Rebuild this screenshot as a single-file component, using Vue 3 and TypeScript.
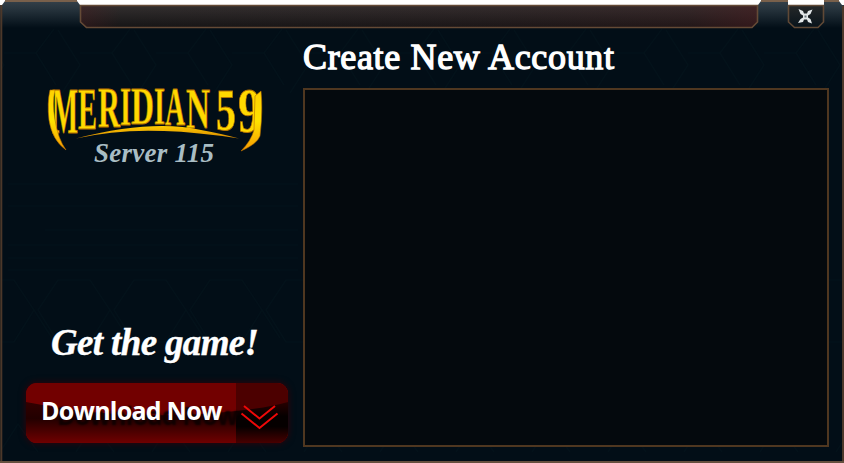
<script setup lang="ts">
interface Glyph { ch: string; x: number; y: number; w: number; size: number }
// Letters of the wordmark: left edge, baseline, width and type size
const glyphs: Glyph[] = [
  { ch: 'M', x: 6, y: 47, w: 26, size: 65 },
  { ch: 'E', x: 32, y: 43, w: 19, size: 60 },
  { ch: 'R', x: 52, y: 41, w: 22, size: 57 },
  { ch: 'I', x: 74, y: 39, w: 11, size: 54 },
  { ch: 'D', x: 85, y: 38, w: 23, size: 53 },
  { ch: 'I', x: 108, y: 38, w: 11, size: 53 },
  { ch: 'A', x: 119, y: 39, w: 20, size: 54 },
  { ch: 'N', x: 140, y: 42, w: 24, size: 58 },
  { ch: '5', x: 170, y: 44, w: 20, size: 60 },
  { ch: '9', x: 192, y: 46, w: 23, size: 63 },
]
const cells: number[] = Array.from({ length: 12 }, (_, i) => i * 76)
</script>

<template>
  <main class="window">
    <svg class="frame" width="844" height="463" viewBox="0 0 844 463" aria-hidden="true">
      <defs>
        <linearGradient id="shell" x1="0" y1="0" x2="0" y2="28" gradientUnits="userSpaceOnUse">
          <stop offset="0" stop-color="#36424b" />
          <stop offset=".35" stop-color="#25323b" />
          <stop offset="1" stop-color="#020e17" />
        </linearGradient>
        <linearGradient id="bar" x1="0" y1="0" x2="0" y2="1">
          <stop offset="0" stop-color="#332f2f" />
          <stop offset="1" stop-color="#151415" />
        </linearGradient>
        <linearGradient id="barGlow" x1="0" y1="0" x2="1" y2="0">
          <stop offset="0" stop-color="#501c20" stop-opacity=".35" />
          <stop offset=".06" stop-color="#501c20" stop-opacity="0" />
          <stop offset=".6" stop-color="#501c20" stop-opacity=".08" />
          <stop offset=".9" stop-color="#501c20" stop-opacity=".2" />
          <stop offset="1" stop-color="#501c20" stop-opacity=".5" />
        </linearGradient>
        <linearGradient id="closeBg" x1="0" y1="0" x2="0" y2="1">
          <stop offset="0" stop-color="#252829" />
          <stop offset="1" stop-color="#08131b" />
        </linearGradient>
      </defs>
      <path fill="url(#shell)" d="M2 5L5 1H77L80 5H758L761 1H788V5H824V1H839L842 5H844V463H0V5Z" />
      <g fill="none" stroke="#06171f" stroke-width="1.5" opacity=".45">
        <g v-for="x in cells" :key="x">
          <path :d="`M${x - 18} 30l22 35 -18 28M${x + 4} 53h32l18 -24M${x + 36} 53l20 32`" />
          <path :d="`M${x - 18} 280h32l20 30 -20 32h-32l-20 -32zM${x + 34} 310l18 28`" />
          <path :d="`M${x} 452l18 -28 20 28`" />
        </g>
        <path d="M8 184h290M8 206h290M45 230h253M8 245h290M8 258h290M8 270h290" />
      </g>
      <path fill="url(#bar)" d="M80 5H758V22L752 28H86L80 22Z" />
      <path fill="url(#barGlow)" d="M80 5H758V22L752 28H86L80 22Z" />
      <path fill="none" stroke="#644a36" stroke-width="1.6" d="M80.500 5.500H757.500V22L752 27.500H86.500L80.500 22Z" />
      <path fill="url(#closeBg)" stroke="#604936" stroke-width="1.6" d="M788.500 5.500H823.500V22L818 27.500H794.500L788.500 22Z" />
      <path fill="none" stroke="#79604b" stroke-width="2" d="M5 1H77M761 1H788M824 1H839" />
      <path fill="none" stroke="#4c382a" stroke-width="2" d="M1.300 5V462M843 6V462" />
      <path fill="none" stroke="#65503f" stroke-width="2" d="M0 462H844" />
    </svg>
    <button class="close" aria-label="Close">
      <svg width="17" height="17" viewBox="0 0 17 17">
        <path fill="#e2e7e9" d="M1.500 1L6 3L7 5.500H10L11 3L15.500 1.500L13.500 6L11 7.500V9.500L13.500 11L15 15.500L11 14L10 11.500H7L6 14L1 15L3.500 11L6 9.500V7.500L3.500 6Z" />
        <path fill="#6b777e" d="M7.500 7.500h2v2h-2z" />
      </svg>
    </button>
    <aside class="side">
      <svg class="logo" width="220" height="70" viewBox="0 0 220 70" role="img">
        <defs>
          <linearGradient id="gold" x1="0" y1="0" x2="0" y2="1">
            <stop offset="0" stop-color="#ffd000" />
            <stop offset=".5" stop-color="#ffe300" />
            <stop offset="1" stop-color="#f69b00" />
          </linearGradient>
          <linearGradient id="goldArc" x1="0" y1="0" x2="0" y2="1">
            <stop offset="0" stop-color="#ffcd00" />
            <stop offset="1" stop-color="#d88600" />
          </linearGradient>
        </defs>
        <text v-for="(g, i) in glyphs" :key="i" :x="g.x" :y="g.y" :font-size="g.size" :textLength="g.w" lengthAdjust="spacingAndGlyphs">{{ g.ch }}</text>
        <g fill="url(#gold)" stroke="#b56c00" stroke-width=".6">
          <path d="M4 4H9Q6 17 9 34Q12 53 20 64Q6 54 3 34Q1 17 4 4Z" />
          <path d="M209 10L215 5Q217 25 214 50Q211 58 195 65Q205 55 208 44Z" />
        </g>
        <path fill="url(#goldArc)" d="M30 52.500Q106 33 155 44Q177 48 193 52.500Q151 46 118 45Q72 43 30 52.500Z" />
      </svg>
      <p class="server">Server 115</p>
      <h2 class="get">Get the game!</h2>
      <button class="download">
        <svg class="gloss" width="262" height="60" viewBox="0 0 262 60" aria-hidden="true">
          <defs>
            <linearGradient id="low" x1="0" y1="0" x2="0" y2="1">
              <stop offset="0" stop-color="#320000" />
              <stop offset=".4" stop-color="#220000" />
              <stop offset="1" stop-color="#700000" />
            </linearGradient>
            <linearGradient id="lowRight" x1="0" y1="0" x2="0" y2="1">
              <stop offset="0" stop-color="#280000" />
              <stop offset=".35" stop-color="#050000" />
              <stop offset=".6" stop-color="#050000" />
              <stop offset="1" stop-color="#480000" />
            </linearGradient>
          </defs>
          <path fill="#720000" d="M0 0H262V60H0Z" />
          <path fill="#4c0000" d="M210 0H262V60H210Z" />
          <path fill="url(#low)" d="M0 19Q100 40 210 28V60H0Z" />
          <path fill="url(#lowRight)" d="M210 28Q240 25 262 19V60H210Z" />
          <path fill="none" stroke="#ed0808" stroke-width="2" d="M218 23l15.500 12.500 15.500 -12.500M215.500 30.500l18 14.500 18 -14.500" />
        </svg>
        <span>Download Now</span>
      </button>
    </aside>
    <section class="main">
      <h1>Create New Account</h1>
      <div class="panel"></div>
    </section>
  </main>
</template>

<style>
body { margin: 0; background: #fff; }
</style>
<style scoped>
* { box-sizing: border-box; }
.window { position: relative; width: 844px; height: 463px; display: grid; grid-template-columns: 303px 526px; overflow: hidden; }
.frame { position: absolute; inset: 0; }
.close { position: absolute; left: 797px; top: 8px; width: 17px; height: 17px; padding: 0; border: 0; background: none; }
.close svg { display: block; }
.side { position: relative; display: flex; flex-direction: column; align-items: flex-start; padding: 86px 0 0 26px; }
.logo { margin-left: 20px; overflow: visible; flex: none; }
.logo text { font-family: "Liberation Serif", serif; font-weight: 700; fill: #ffd900; stroke: #b87300; stroke-width: .8; }
.server, .get { font-family: "Liberation Serif", serif; font-style: italic; font-weight: 700; white-space: nowrap; }
.server { color: #a9bdc4; font-size: 27px; line-height: 30px; letter-spacing: .25px; margin: -18px 0 0 68px; }
.get { color: #fff; font-size: 37px; line-height: 44px; letter-spacing: -.65px; -webkit-text-stroke: .4px #fff; margin: 153px 0 0 25px; }
.download { position: relative; display: flex; align-items: center; width: 262px; height: 60px; margin-top: 18px; padding: 0 0 6px 15px; border: 0; border-radius: 11px; overflow: hidden; background: #700000; box-shadow: 0 0 7px #350008; color: #fff; font: 700 25px/30px "Open Sans", sans-serif; letter-spacing: -.75px; white-space: nowrap; }
.gloss { position: absolute; inset: 0; }
.download span { position: relative; text-shadow: 16px 5px 2px #100000; }
.main { position: relative; padding-top: 37px; }
h1 { margin: 0; color: #fff; font: 400 36px/40px "Liberation Serif", serif; letter-spacing: .65px; -webkit-text-stroke: 1.3px #fff; white-space: nowrap; }
.panel { margin-top: 11px; height: 359px; border: 2px solid #4f3720; background: #04090d; }
</style>
